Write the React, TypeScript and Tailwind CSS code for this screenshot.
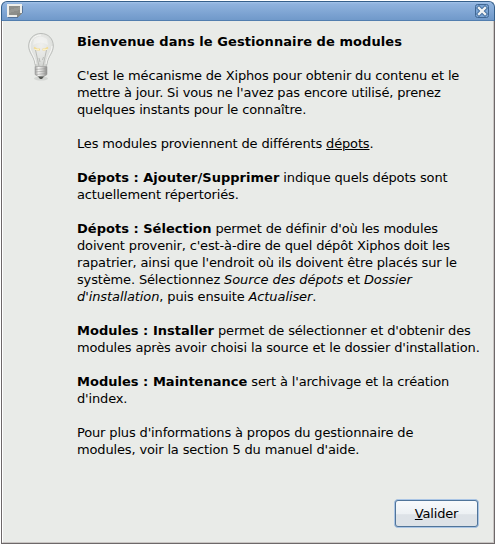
import type { ReactNode } from "react";

function WindowIcon() {
  return (
    <svg width="16" height="14" viewBox="0 0 16 14" shapeRendering="crispEdges" aria-hidden="true">
      <path d="M1 13h10v1H1zM15 2h1v7h-1z" fill="#56749a" />
      <path d="M0 0h15v9l-4 4H0z" fill="#eeeeea" />
      <path d="M2 2h11v7h-3v2H2z" fill="#8d8e8a" />
      <path d="M2 6l11-3v3L2 9z" fill="#979894" />
      <path d="M10 9h5l-4 4h-1z" fill="#858783" />
    </svg>
  );
}

function Bulb() {
  return (
    <svg width="30" height="50" viewBox="0 0 30 50" aria-hidden="true">
      <defs>
        <radialGradient id="glass" cx=".5" cy=".35" r=".65">
          <stop offset="0" stopColor="#efefed" />
          <stop offset=".65" stopColor="#e0e2df" />
          <stop offset="1" stopColor="#cfd1ce" />
        </radialGradient>
        <linearGradient id="metal">
          <stop offset="0" stopColor="#a0a09e" />
          <stop offset=".3" stopColor="#f6f6f4" />
          <stop offset=".65" stopColor="#c8c8c6" />
          <stop offset="1" stopColor="#888886" />
        </linearGradient>
      </defs>
      <ellipse cx="15" cy="46.500" rx="7" ry="2" fill="#d4d6d3" />
      <path d="M15 1.500C7.500 1.500 2.700 7 2.700 14c0 7 5.300 10 6.300 18 .3 2 1 3 2.500 3h7c1.500 0 2.200-1 2.500-3 1-8 6.300-11 6.300-18 0-7-4.800-12.500-12.300-12.500z" fill="url(#glass)" stroke="#bbbdba" />
      <path d="M15 3C8.500 3 4 8 4 14c0 6 5 10 6 18M26 14c0 6-5 10-6 18" fill="none" stroke="#f8f8f6" />
      <path d="M13 34L9.500 18M17 34l3.500-16M14 30l-1-4M16.500 28l1-3" fill="none" stroke="#b4b6b2" strokeWidth=".9" />
      <path d="M8 15.500l3 2h3M16.500 17.500h2.500l3-2" fill="none" stroke="#f3dc94" strokeWidth="1.800" />
      <path d="M9 17.500h4M17 17.500h4" stroke="#fff6ce" strokeWidth=".8" />
      <path d="M8 7q6-5 13 0l1 6q-7-5-15 0z" fill="#fff" opacity=".35" />
      <path d="M9 34.500h12v8l-3 2h-6l-3-2z" fill="url(#metal)" stroke="#a0a09e" strokeWidth=".6" />
      <path d="M9 37.500l12-1M9 40l12-1M9.500 42.500l11-1" stroke="#9b9b99" strokeWidth=".6" />
      <path d="M12 44.500h6L16 47h-2z" fill="#555753" />
    </svg>
  );
}

function CloseButton() {
  return (
    <button className="flex h-[14px] w-[14px] items-center justify-center" aria-label="Fermer">
      <svg width="14" height="14" viewBox="0 0 14 14">
        <rect x=".5" y=".5" width="13" height="13" rx="2" fill="#7ba4d4" stroke="#416894" />
        <path d="M4 4l6 6m0-6l-6 6" stroke="#416b9a" strokeWidth="4.200" strokeLinecap="square" />
        <path d="M4 4l6 6m0-6l-6 6" stroke="#f2f4f4" strokeWidth="2.400" strokeLinecap="square" />
      </svg>
    </button>
  );
}

function Paragraph({ lines }: { lines: ReactNode[] }) {
  return (
    <p>
      {lines.map((line, i) => (
        <span key={i} className="block whitespace-nowrap">{line}</span>
      ))}
    </p>
  );
}

function Strong({ children }: { children: ReactNode }) {
  return <b className="tracking-[0.02px]">{children}</b>;
}

function Em({ children }: { children: ReactNode }) {
  return <i className="tracking-[-0.09px]">{children}</i>;
}

const paragraphs: ReactNode[][] = [
  [<b className="tracking-[0.075px]">Bienvenue dans le Gestionnaire de modules</b>],
  [
    "C'est le mécanisme de Xiphos pour obtenir du contenu et le",
    "mettre à jour. Si vous ne l'avez pas encore utilisé, prenez",
    "quelques instants pour le connaître.",
  ],
  [<>Les modules proviennent de différents <u className="decoration-1 underline-offset-1">dépots</u>.</>],
  [
    <><Strong>Dépots : Ajouter/Supprimer</Strong> indique quels dépots sont</>,
    "actuellement répertoriés.",
  ],
  [
    <><Strong>Dépots : Sélection</Strong> permet de définir d'où les modules</>,
    "doivent provenir, c'est-à-dire de quel dépôt Xiphos doit les",
    "rapatrier, ainsi que l'endroit où ils doivent être placés sur le",
    <>système. Sélectionnez <Em>Source des dépots</Em> et <Em>Dossier</Em></>,
    <><Em>d'installation</Em>, puis ensuite <Em>Actualiser</Em>.</>,
  ],
  [
    <><Strong>Modules : Installer</Strong> permet de sélectionner et d'obtenir des</>,
    "modules après avoir choisi la source et le dossier d'installation.",
  ],
  [
    <><Strong>Modules : Maintenance</Strong> sert à l'archivage et la création</>,
    "d'index.",
  ],
  [
    "Pour plus d'informations à propos du gestionnaire de",
    "modules, voir la section 5 du manuel d'aide.",
  ],
];

export default function App() {
  return (
    <div className="h-[545px] w-[496px] bg-white p-px font-['DejaVu_Sans',sans-serif] text-[13px] leading-[17px] tracking-[-0.15px] text-black">
      <div className="flex h-[543px] w-[494px] flex-col">
        <header className="flex h-[20px] shrink-0 items-center justify-between rounded-t-[6px] border border-[#355f8a] border-b-[#527eaf] bg-linear-to-b from-[#a5c5eb] from-0% via-[#90b3de] via-10% to-[#7099ca] px-[5px]">
          <WindowIcon />
          <CloseButton />
        </header>
        <main className="flex grow flex-col border border-t-0 border-[#6d6869] bg-[#e9ebe8]">
          <div className="flex grow flex-col border-r border-b border-l border-r-[#c9c5c3] border-b-[#c9c5c3] border-l-white">
            <div className="flex">
              <div className="w-[74px] shrink-0 pt-[11px] pl-[23px]"><Bulb /></div>
              <div className="flex flex-col gap-[17px] pt-[12px]">
                {paragraphs.map((lines, i) => <Paragraph key={i} lines={lines} />)}
              </div>
            </div>
            <div className="mt-auto flex justify-end pr-[14px] pb-[14px]">
              <button className="h-[29px] w-[85px] rounded-[4px] border border-[#aac5e5] bg-[#507499] p-px">
                <span className="flex h-full items-center justify-center rounded-[2px] bg-linear-to-b from-[#f8fafc] from-0% via-[#edf1f4] via-50% to-[#dde2e7] to-55% pb-px tracking-[-0.2px]">
                  <span><u className="decoration-1 underline-offset-1">V</u>alider</span>
                </span>
              </button>
            </div>
          </div>
        </main>
      </div>
    </div>
  );
}
